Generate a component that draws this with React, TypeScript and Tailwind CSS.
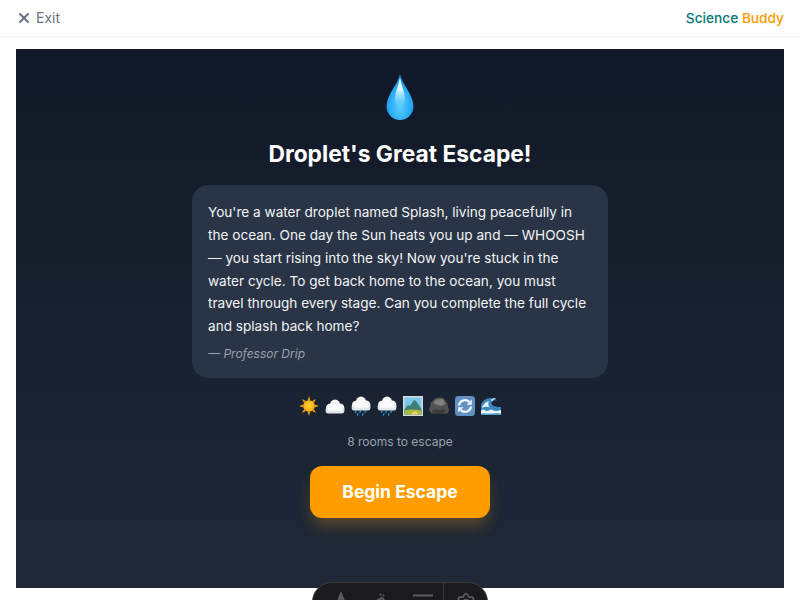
import { Settings, X } from "lucide-react";

const Sun = () => (
  <svg width="20" height="20" viewBox="0 0 20 20">
    <defs>
      <radialGradient id="sun" cx="50%" cy="45%" r="55%">
        <stop offset="0%" stopColor="#ffd23c" />
        <stop offset="100%" stopColor="#f9a90f" />
      </radialGradient>
    </defs>
    <g fill="#f0a010">
      <path d="M10 0l1.400 4.400H8.600zM10 20l-1.400-4.400h2.800zM0 10l4.400-1.400v2.800zM20 10l-4.400 1.400V8.600z" />
      <path d="M2.900 2.900l4 2.200-1.800 1.800zM17.100 17.100l-4-2.200 1.800-1.800zM2.900 17.100l2.200-4 1.800 1.800zM17.100 2.900l-2.200 4-1.800-1.800z" />
    </g>
    <circle cx="10" cy="10" r="5.800" fill="url(#sun)" />
  </svg>
);

const CloudShape = ({ y }: { y: number }) => (
  <g transform={`translate(0 ${y}) scale(1 1.180)`}>
    <circle cx="4.800" cy="7.500" r="3.900" fill="#f1f3f5" />
    <circle cx="10" cy="5.200" r="5.200" fill="#fafbfc" />
    <circle cx="15.200" cy="7.500" r="4.200" fill="#f1f3f5" />
    <rect x="0.600" y="6.800" width="18.800" height="5" rx="2.500" fill="#e4e7eb" />
    <rect x="3" y="5.500" width="14" height="4" fill="#fafbfc" />
  </g>
);

const Cloud = () => (
  <svg width="20" height="20" viewBox="0 0 20 20">
    <CloudShape y={3.500} />
  </svg>
);

const RainCloud = () => (
  <svg width="20" height="20" viewBox="0 0 20 20">
    <CloudShape y={0.500} />
    <g stroke="#2f9be6" strokeWidth="1.300" strokeLinecap="round">
      <path d="M5 15l-.5 1.300M9.500 15l-.5 1.300M14.500 15l-.5 1.300M7 17.800l-.5 1.300M12 17.800l-.5 1.300" />
    </g>
  </svg>
);

const Picture = () => (
  <svg width="20" height="20" viewBox="0 0 20 20">
    <rect width="20" height="20" fill="#d5dbdd" />
    <rect x="1.500" y="1.500" width="17" height="17" fill="#7cc8ea" />
    <path d="M1.500 13L5 9l2 1 4-6 2 1 5.500 8v5.500h-17z" fill="#3d7f78" />
    <path d="M1.500 14.500c4-1.500 11-1.500 17 0v4h-17z" fill="#a8bb3e" />
    <path d="M8 18.500c.5-1.500 2-3 5-3.500l2.500 3.500z" fill="#ecd06a" />
  </svg>
);

const Rock = () => (
  <svg width="20" height="20" viewBox="0 0 20 20">
    <path d="M0 14 2 6.500 7 2l7-.5 4.200 5.500 1.800 7.500-1.500 3H2.500z" fill="#525252" />
    <path d="M4 7l3.500-3.500 6-.5 3 4.500-4 2.500-4-1z" fill="#808080" />
    <path d="M3 15l4-2 3 1.500 5-1.500 2 2-3 2.500H5z" fill="#3c3c3c" />
  </svg>
);

const Cycle = () => (
  <svg width="20" height="20" viewBox="0 0 20 20">
    <rect width="20" height="20" rx="3.500" fill="#6292c4" />
    <g fill="none" stroke="#f3f6fa" strokeWidth="2.200">
      <path d="M4 9.500a6 6 0 0 1 10.200-3.600" />
      <path d="M16 10.500a6 6 0 0 1-10.200 3.600" />
    </g>
    <path d="M16.800 3.500v5.200h-5.200zM3.200 16.500v-5.200h5.200z" fill="#f3f6fa" />
  </svg>
);

const Wave = () => (
  <svg width="20" height="20" viewBox="0 0 20 20">
    <path d="M0 19V9c1-4 5-7 10-7 3 0 5 1 6 2.500-3-.5-5 .5-5.500 2.500C10 9 13 11 20 11v8z" fill="#3a86bf" />
    <path d="M0 14.500c2-1.500 3-1 4-.2s3 1 4 0 3-1 4 0 4 1 8-.3V19H0z" fill="#eef5f9" />
    <path d="M1 12c1-3.500 3.500-6 7-7-1 2-1 4.500.5 6.500-2.500-1-5-1-7.500.5zM10 4c1.500-1.500 3.500-2 5-1.500-2 .5-3.500 1.500-4 3z" fill="#eef5f9" />
    <path d="M0 17.500c3-1 6 .5 10 0s7-1 10 0V19H0z" fill="#5a9ecf" />
  </svg>
);

export default function App() {
  return (
    <div className="relative h-[600px] overflow-hidden bg-white font-['Inter',sans-serif]">
      <header className="flex h-[37px] items-center justify-between border-b border-gray-100 px-4">
        <button className="flex items-center gap-1 text-sm text-gray-500">
          <X size={16} strokeWidth={3} />
          Exit
        </button>
        <div className="text-[13.700px] font-medium">
          <span className="text-teal-700">Science</span> <span className="text-amber-500">Buddy</span>
        </div>
      </header>

      <main className="px-4 pt-3">
        <div className="flex h-[539px] flex-col items-center bg-gradient-to-b from-[#111827] to-[#1f2937] pt-6 text-center">
          <svg width="30" height="48" viewBox="0 0 30 48">
            <defs>
              <radialGradient id="drop" cx="50%" cy="68%" r="62%">
                <stop offset="0%" stopColor="#5fd2ff" />
                <stop offset="70%" stopColor="#22a6f2" />
                <stop offset="100%" stopColor="#0c84dc" />
              </radialGradient>
              <linearGradient id="shine" x1="0" y1="0" x2="0" y2="1">
                <stop offset="0%" stopColor="#ffffff" />
                <stop offset="45%" stopColor="#d8f5ff" />
                <stop offset="100%" stopColor="#9fe6ff" stopOpacity="0" />
              </linearGradient>
            </defs>
            <path d="M15 1C13 11 1.500 22 1.500 33.500 1.500 41 7.500 47 15 47s13.500-6 13.500-13.500C28.500 22 17 11 15 1z" fill="url(#drop)" />
            <path d="M15 4c-1 8-5 15-5 22 0 4 2 7 5 7s5-3 5-7c0-7-4-14-5-22z" fill="url(#shine)" />
          </svg>
          <h1 className="mt-[17px] text-[22.800px] leading-8 font-bold text-white">Droplet's Great Escape!</h1>

          <div className="mt-[15px] w-[416px] rounded-2xl bg-[#293446] p-4 text-left">
            <p className="text-[13.600px] leading-[22.850px] text-gray-100">
              You're a water droplet named Splash, living peacefully in the ocean. One day the Sun heats you up and — WHOOSH — you start rising into the sky! Now you're stuck in the water cycle. To get back home to the ocean, you must travel through every stage. Can you complete the full cycle and splash back home?
            </p>
            <p className="mt-2 text-xs italic text-gray-400">— Professor Drip</p>
          </div>

          <div className="mt-[18px] flex items-center gap-[6px]">
            <Sun />
            <Cloud />
            <RainCloud />
            <RainCloud />
            <Picture />
            <Rock />
            <Cycle />
            <Wave />
          </div>

          <p className="mt-[18px] text-xs text-gray-400">8 rooms to escape</p>

          <button className="mt-4 h-[52px] w-[180px] rounded-xl bg-[#ff9d00] text-[17.500px] font-bold text-white shadow-[0_10px_15px_-3px_rgba(245,158,11,0.3)]">
            Begin Escape
          </button>
        </div>
      </main>

      {/* floating toolbar, mostly cut off by the bottom of the page */}
      <div className="absolute left-[312px] top-[582px] flex h-10 w-[176px] items-center rounded-[20px] border border-[#3a3a3e] bg-[#1b1b1e] text-[#5c5c62]">
        <div className="flex flex-1 items-center justify-around pl-2">
          <svg width="20" height="20" viewBox="0 0 20 20" fill="none" stroke="currentColor" strokeWidth="3">
            <path d="M3 20 10 3l7 17" />
          </svg>
          <svg width="20" height="20" viewBox="0 0 20 20" fill="none" stroke="currentColor" strokeWidth="2">
            <path d="M2 10l8-4 6 7-6 4z" />
            <path d="M8 3l1-1M11 4l1-1" />
          </svg>
          <svg width="20" height="20" viewBox="0 0 20 20" fill="none" stroke="currentColor" strokeWidth="2">
            <path d="M0 3.500h20M0 10h20" />
          </svg>
        </div>
        <div className="flex h-full w-[44px] items-center justify-center border-l border-[#3a3a3e]">
          <Settings size={20} />
        </div>
      </div>
    </div>
  );
}
